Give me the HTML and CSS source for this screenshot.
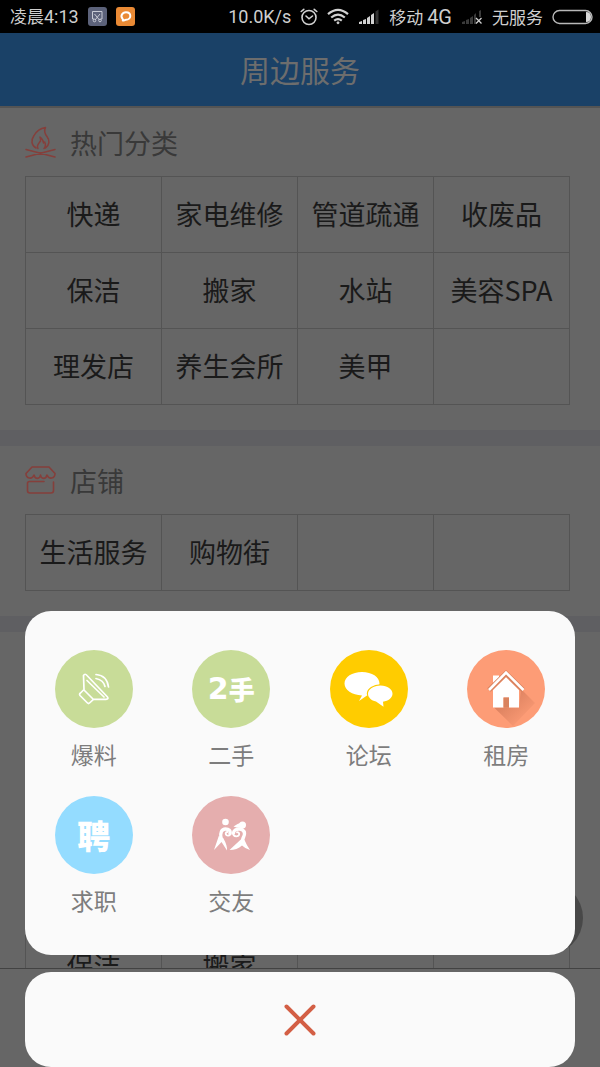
FILE: index.html
```html
<!DOCTYPE html>
<html lang="zh-CN">
<head>
<meta charset="utf-8">
<meta name="viewport" content="width=device-width, initial-scale=1">
<title>周边服务</title>
<link rel="stylesheet" href="styles.css">
</head>
<body>
<div class="app">
  <div class="status">
    <span class="status-text">凌晨<span class="latin">4:13</span></span>
    <svg class="badge" width="19" height="19" viewBox="0 0 19 19" aria-hidden="true">
      <rect width="19" height="19" rx="3" fill="#5c627a"/>
      <path d="M6 12H4.500V4.500H14V12H12.500M6.500 7l5 6M12 7l-5 6" fill="none" stroke="#c9ccd6" stroke-width="1"/>
      <circle cx="6.500" cy="13.500" r="1.300" fill="none" stroke="#c9ccd6"/>
      <circle cx="12" cy="13.500" r="1.300" fill="none" stroke="#c9ccd6"/>
    </svg>
    <svg class="badge" width="19" height="19" viewBox="0 0 19 19" aria-hidden="true">
      <rect width="19" height="19" rx="3" fill="#ea8a35"/>
      <path d="M10 5.200c3 0 4.300 1.700 4.300 3.700s-1.700 3.800-4.300 3.800c-1 0-1.700.9-3.200.8.600-.7.300-1.200-.3-1.800C4.300 9.300 6 5.200 10 5.200z" fill="none" stroke="#fff" stroke-width="2" stroke-linejoin="round"/>
    </svg>
    <span class="status-text latin speed">10.0K/s</span>
    <svg width="18" height="18" viewBox="0 0 18 18" fill="none" stroke="#d2d2d2" stroke-width="1.600" stroke-linecap="round" aria-hidden="true">
      <circle cx="9" cy="9.500" r="7"/><path d="M1.200 3.500 3.800 1.300M16.800 3.500 14.200 1.300M6 8l3 2.800L12.500 8"/>
    </svg>
    <svg width="22" height="17" viewBox="0 0 22 17" fill="none" stroke="#d2d2d2" stroke-width="2.200" aria-hidden="true">
      <path d="M1 6.200Q11-2.500 21 6.200M4.200 9.500q6.800-5.600 13.600 0M7.200 12.600q3.800-3 7.600 0"/><circle cx="11" cy="14.800" r="1" fill="#d2d2d2" stroke-width="1"/>
    </svg>
    <svg width="22" height="15" viewBox="0 0 22 15" aria-hidden="true">
      <path d="M1 15v-2l3-1v3zM5 15v-4l3-1v5zM9 15V9l3-2v8zM13 15V6l3-2v11z" fill="#d2d2d2"/><path d="M17.500 15V2.500l3-2V15z" fill="#333"/>
    </svg>
    <span class="status-text">移动 <span class="latin network">4G</span></span>
    <svg width="22" height="15" viewBox="0 0 22 15" aria-hidden="true">
      <path d="M1 15v-2l3-1v3zM5 15v-4l3-1v5zM9 15V9l3-2v8zM13 15V6l2-2v11zM18 8V2l2-1v7z" fill="#3a3a3a"/><path d="M15 9l5.500 5.500M20.500 9 15 14.500" stroke="#d2d2d2" stroke-width="1.300"/>
    </svg>
    <span class="status-text">无服务</span>
    <svg class="battery" width="41" height="16" viewBox="0 0 41 16" aria-hidden="true">
      <rect x="1" y="1.500" width="39" height="13" rx="6.500" fill="none" stroke="#b8b8b8" stroke-width="1.400"/><path d="M34 3q5 0 5 5t-5 5z" fill="#d8d8d8"/>
    </svg>
  </div>
  <header class="header"><h1>周边服务</h1></header>
  <main class="content">
    <section class="section">
      <h2>
        <svg width="31" height="32" viewBox="0 0 31 32" fill="none" stroke="#853f3b" stroke-width="1.500" stroke-linecap="round" stroke-linejoin="round" aria-hidden="true">
          <path d="M11 22C6 19 6 14 9 9.500 11 6 15 2.500 20.500 1.500 18.500 5.500 20 8 22 10.500 25 14.500 24.500 19 20.500 22M13 22.500c-2-3 .5-4.500 2.500-7.500.5-2-.5-3-.5-4 2.500 2 3.500 4 3.500 6l1.200-1c1.300 3 .8 5-.7 6.500M1 23.500l29 7.500M30 23.500 1 31"/>
        </svg>
        热门分类
      </h2>
      <table class="grid">
        <tr><td>快递</td><td>家电维修</td><td>管道疏通</td><td>收废品</td></tr>
        <tr><td>保洁</td><td>搬家</td><td>水站</td><td>美容SPA</td></tr>
        <tr><td>理发店</td><td>养生会所</td><td>美甲</td><td></td></tr>
      </table>
    </section>
    <section class="section">
      <h2>
        <svg width="31" height="28" viewBox="0 0 31 28" fill="none" stroke="#853f3b" stroke-width="1.600" stroke-linecap="round" stroke-linejoin="round" aria-hidden="true">
          <path d="M7 1h17l6 6.500c0 5-6 6.500-8 1.500-1 4.500-6 4.500-6.500 0-.5 4.500-5.500 4.500-6.500 0-2 5-8 3.500-8-1.500zM19 15.500H4.500Q2.500 15.500 2.500 17.500V24.500Q2.500 27 5 27H26Q28.500 27 28.500 24.500V16"/>
        </svg>
        店铺
      </h2>
      <table class="grid">
        <tr><td>生活服务</td><td>购物街</td><td></td><td></td></tr>
      </table>
    </section>
    <section class="section">
      <h2></h2>
      <table class="grid">
        <tr><td></td><td></td><td></td><td></td></tr>
        <tr><td></td><td></td><td></td><td></td></tr>
        <tr><td></td><td></td><td></td><td></td></tr>
        <tr><td>保洁</td><td>搬家</td><td></td><td></td></tr>
      </table>
    </section>
  </main>
  <div class="tabbar"></div>
  <div class="float"></div>
  <div class="sheet">
    <nav class="panel">
      <button class="item" type="button">
        <span class="circle green">
          <svg width="78" height="78" viewBox="0 0 78 78" fill="none" stroke="#fff" stroke-width="1.700" stroke-linejoin="round" stroke-linecap="round" aria-hidden="true">
            <path d="M28.500 25.500Q30 23 32 25.500L52.500 47Q54 49 51 49.300H38.500L34.500 53Q33.500 54 32.500 53L25 45.500Q24 44 25.500 43L29 39.500zM29 40l9.500 9.500M32 30.500 49 47M41 24.500q11 1 12.500 12.500M41 28.500q7.500 1.500 9 8"/>
          </svg>
        </span>
        <span class="label">爆料</span>
      </button>
      <button class="item" type="button">
        <span class="circle green word" aria-hidden="true"><span class="digit">2</span>手</span>
        <span class="label">二手</span>
      </button>
      <button class="item" type="button">
        <span class="circle yellow">
          <svg width="78" height="78" viewBox="0 0 78 78" aria-hidden="true">
            <path d="M32 22c10 0 17.500 5 17.500 11.500S42 45 37 45.500L29 51l3-5.500C22 45 14.500 40 14.500 33.500S22 22 32 22z" fill="#fff"/>
            <path d="M50.500 35.500c7 0 12 3.700 12 8.200 0 4-4 7.300-9.500 8l.5 5-7.500-5.200C41.500 50.500 38 47.500 38 43.700c0-4.500 5.500-8.200 12.500-8.200z" fill="#fff" stroke="#fc0" stroke-width="2.400" paint-order="stroke"/>
          </svg>
        </span>
        <span class="label">论坛</span>
      </button>
      <button class="item" type="button">
        <span class="circle orange">
          <svg width="78" height="78" viewBox="0 0 78 78" aria-hidden="true">
            <defs>
              <linearGradient id="shade" x1="0" y1="0" x2="1" y2="1">
                <stop offset=".3" stop-color="#dd8260"/>
                <stop offset=".85" stop-color="#dd8260" stop-opacity="0"/>
              </linearGradient>
            </defs>
            <path d="M54 39 68 53 46 76 27 57.500H52z" fill="url(#shade)"/>
            <path d="M26 40 39 27l13 13v17.500H42V47.500H36.500V57.500H26z" fill="#fff"/>
            <path d="M26 25.500h6v6l-6 6z" fill="#fff"/>
            <path d="M22 40 39 23.500 56 40" fill="none" stroke="#d9835f" stroke-width="5"/>
            <path d="M22 40 39 22.500 56.500 40" fill="none" stroke="#fff" stroke-width="2.600"/>
            <path d="M36.500 47.500H42v10h-5.500z" fill="#d9835f"/>
          </svg>
        </span>
        <span class="label">租房</span>
      </button>
      <button class="item" type="button">
        <span class="circle blue word large" aria-hidden="true">聘</span>
        <span class="label">求职</span>
      </button>
      <button class="item" type="button">
        <span class="circle pink">
          <svg width="78" height="78" viewBox="0 0 78 78" fill="none" stroke="#fff" stroke-linecap="round" stroke-linejoin="round" aria-hidden="true">
            <circle cx="33.500" cy="26" r="3.300" fill="#fff" stroke="none"/>
            <circle cx="50.500" cy="29" r="3.500" fill="#fff" stroke="none"/>
            <path d="M41.500 30.500q4.500-3.500 9-4v5q-5 .8-9-1z" fill="#fff" stroke="none"/>
            <path d="M29 42c-1-5 .5-9 4.500-9 3.500 0 5.500 2 4.500 4.500" stroke-width="3.400"/>
            <path d="M38.700 36.500c0 4-5.200 4-5 .8q.3-1.500 1.800-1.300" stroke-width="1.800"/>
            <path d="M26.800 40 22 54l7.500-8 5.500 8.500q.5-5-3.800-12.500z" fill="#fff" stroke="none"/>
            <path d="M41.500 37c0-5 10.500-6 11 .5.200 3-2 4-2 7" stroke-width="3.400"/>
            <path d="M41 37c0 4.500 6.500 4 6.200.8q-.5-2-2.200-1.500" stroke-width="1.800"/>
            <path d="M48.800 43.500 37.500 54q7.500 0 12.500-4.500 3 3 8 4.500-3.500-5-5.700-10.500z" fill="#fff" stroke="none"/>
          </svg>
        </span>
        <span class="label">交友</span>
      </button>
    </nav>
    <button class="close" type="button" aria-label="关闭">
      <svg width="32" height="32" viewBox="0 0 32 32" aria-hidden="true">
        <path d="M2.500 2.500l27 27M29.500 2.500l-27 27" stroke="#d35f45" stroke-width="4" stroke-linecap="round"/>
      </svg>
    </button>
  </div>
</div>
</body>
</html>
```
FILE: styles.css
```css
* { box-sizing: border-box; }
body {
  margin: 0;
  font-family: "Noto Sans CJK SC", sans-serif;
  background: #666;
}
.app {
  position: relative;
  display: flex;
  flex-direction: column;
  height: 100vh;
  overflow: hidden;
}
.status {
  flex: none;
  display: flex;
  align-items: center;
  gap: 9px;
  height: 33px;
  padding: 0 7px 0 10px;
  background: #000;
  color: #cfcfcf;
  white-space: nowrap;
}
.status svg { flex: none; }
.status-text { font-size: 17px; line-height: 24px; }
.latin { font-family: Roboto, sans-serif; font-size: 18px; }
.network { font-size: 20px; }
.speed { margin-left: auto; }
.header {
  flex: none;
  display: flex;
  align-items: center;
  justify-content: center;
  height: 75px;
  padding-bottom: 2px;
  background: #1a4167;
  border-bottom: 2px solid #545454;
}
.header h1 {
  margin: 0;
  font-size: 30px;
  line-height: 40px;
  font-weight: 400;
  color: #6d6d6d;
}
.content { flex: 1; min-height: 0; overflow: hidden; }
.section {
  padding: 0 30px 25px 25px;
  border-bottom: 16px solid #5f5f62;
}
.section h2 {
  display: flex;
  align-items: center;
  gap: 14px;
  height: 68px;
  margin: 0;
  font-size: 27px;
  font-weight: 400;
  color: #393939;
}
.grid {
  width: 100%;
  table-layout: fixed;
  border-collapse: collapse;
}
.grid td {
  height: 76px;
  padding: 0 0 2px;
  border: 1px solid #545454;
  text-align: center;
  font-size: 27px;
  line-height: 36px;
  color: #1a1a1a;
  white-space: nowrap;
}
.tabbar {
  flex: none;
  height: 99px;
  border-top: 1px solid #424242;
  background: #666;
}
.float {
  position: absolute;
  right: 17px;
  bottom: 112px;
  width: 74px;
  height: 74px;
  border-radius: 50%;
  background: #484848;
}
.sheet {
  position: absolute;
  left: 25px;
  right: 25px;
  bottom: 0;
  display: flex;
  flex-direction: column;
  gap: 17px;
}
.panel {
  display: grid;
  grid-template-columns: repeat(4, 1fr);
  row-gap: 25px;
  padding: 39px 0 38px;
  border-radius: 26px;
  background: #fafafa;
}
.item {
  display: flex;
  flex-direction: column;
  align-items: center;
  gap: 9px;
  padding: 0;
  border: 0;
  background: none;
  font: inherit;
  color: #7d7d7d;
}
.circle {
  display: flex;
  align-items: center;
  justify-content: center;
  width: 78px;
  height: 78px;
  border-radius: 50%;
}
.green { background: #c8dc98; }
.yellow { background: #fc0; }
.orange { background: #fd9c76; }
.blue { background: #94dcff; }
.pink { background: #e5aeae; }
.word {
  color: #fff;
  font-size: 26px;
  line-height: 32px;
  font-weight: 900;
}
.digit {
  font-family: "DejaVu Sans", sans-serif;
  font-size: 30px;
  font-weight: 700;
}
.large { font-size: 33px; }
.label { font-size: 23px; line-height: 34px; }
.close {
  display: flex;
  align-items: center;
  justify-content: center;
  height: 95px;
  padding: 0;
  border: 0;
  border-radius: 26px;
  background: #fafafa;
}
```
